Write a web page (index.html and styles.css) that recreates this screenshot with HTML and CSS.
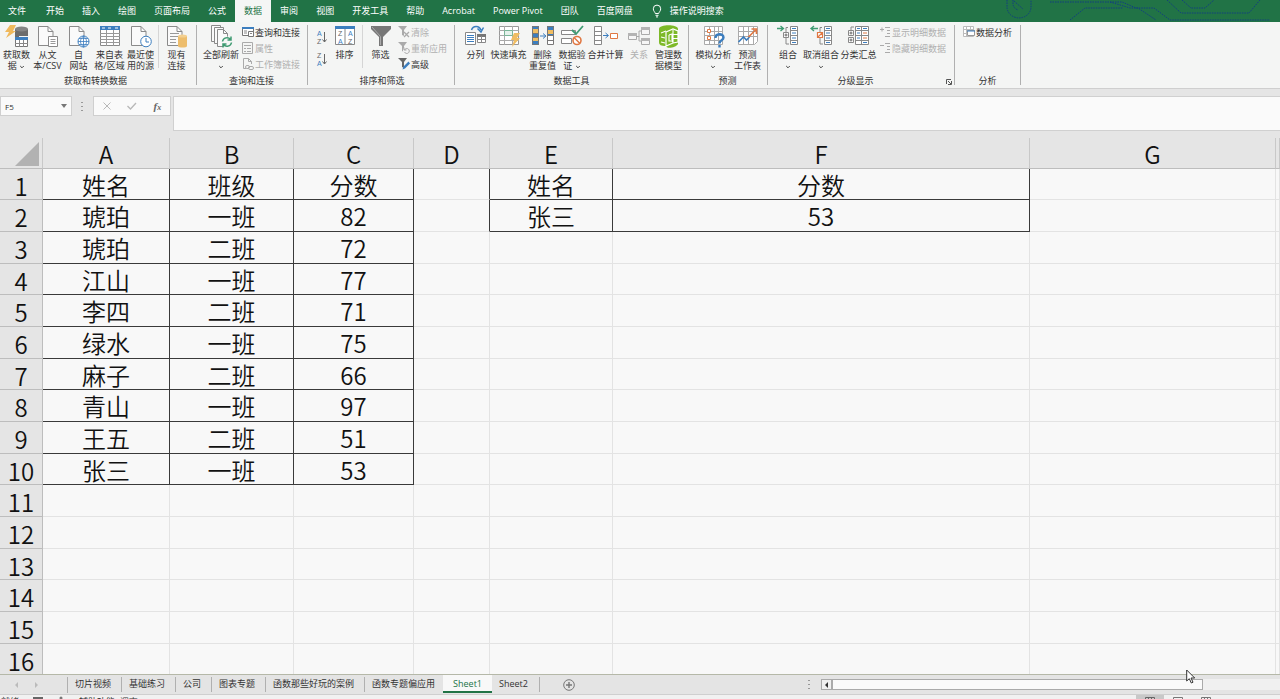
FILE: index.html
```html
<!DOCTYPE html>
<html lang="zh-CN">
<head>
<meta charset="utf-8">
<title>Sheet1</title>
<link rel="stylesheet" href="styles.css">
</head>
<body>
<svg class="sprite" aria-hidden="true">
  <symbol id="doc" viewBox="0 0 24 24"><path d="M2.500 1.500h9.500l5 5v14h-14.500z" fill="#fafafa" stroke="#8a8a8a"/><path d="M12 1.500v5h5" fill="none" stroke="#8a8a8a"/></symbol>
  <symbol id="chev" viewBox="0 0 6 4"><path d="M1.200 1l1.800 1.800L4.800 1" fill="none" stroke="#444"/></symbol>
</svg>

<nav class="tabs">
  <button class="tab first">文件</button><button class="tab">开始</button><button class="tab">插入</button><button class="tab">绘图</button><button class="tab">页面布局</button><button class="tab">公式</button><button class="tab on">数据</button><button class="tab">审阅</button><button class="tab">视图</button><button class="tab">开发工具</button><button class="tab">帮助</button><button class="tab">Acrobat</button><button class="tab">Power Pivot</button><button class="tab">团队</button><button class="tab">百度网盘</button>
  <button class="tell"><svg width="10" height="14" viewBox="0 0 10 14" fill="none" stroke="#fff"><path d="M3.300 9.500C3 8 1.300 7 1.300 4.800a3.700 3.700 0 0 1 7.400 0C8.700 7 7 8 6.700 9.500zM3.500 11.300h3M4 12.900h2"/></svg>操作说明搜索</button>
  <svg class="circuit" width="280" height="22" viewBox="0 0 280 22" fill="none" stroke="#123f80" stroke-dasharray="1.500 1"><path d="M7 0v7a11 10 0 0 0 24 0V0M13 0v4a7 7 0 0 0 5 6M14 1l9 8M50 2h60M70 20l15-12h38M110 2l20 6h8l18 12M110 2h12l14 6h18l16 12h100M167 0l14 13h68l11-13M182 0l9 8h14l9-8"/></svg>
</nav>

<header class="ribbon">
  <section class="group g1">
    <div class="body">
      <button class="big w31"><svg viewBox="0 0 24 24"><path d="M10 4v13h4V11h9V4z" fill="#6c6c6c"/><ellipse cx="16.500" cy="4" rx="6.500" ry="2.500" fill="#858585"/><path d="M5 0h6L8 6h3L1 13l3-6H0z" fill="#f0b95c"/><path d="M10.500 12.500h12v9h-12z" fill="#fff" stroke="#777"/><path d="M10 12h13v3H10z" fill="#3c7ebf"/><path d="M14.500 15v7M18.500 15v7M10 18.500h13" stroke="#888"/></svg><span>获取数<br>据 <svg class="chev"><use href="#chev"/></svg></span></button>
      <button class="big w31"><svg viewBox="0 0 24 24"><use href="#doc"/><path d="M12.500 11.500h9v10h-9z" fill="#fff" stroke="#888"/><path d="M14.500 14.500h5M14.500 16.500h5M14.500 18.500h5" stroke="#999"/></svg><span>从文<br>本/CSV</span></button>
      <button class="big w31"><svg viewBox="0 0 24 24"><use href="#doc"/><circle cx="16.500" cy="16.500" r="5.500" fill="#fff" stroke="#3c7ebf"/><path d="M11 16.500h11M12 13.500h9M12 19.500h9M16.500 11v11M16.500 11c-4 3-4 8 0 11M16.500 11c4 3 4 8 0 11" fill="none" stroke="#3c7ebf" stroke-width=".8"/></svg><span>自<br>网站</span></button>
      <button class="big w31"><svg viewBox="0 0 24 24"><path d="M2.500 1.500h19v19h-19z" fill="#fff" stroke="#888"/><path d="M2 1h20v4H2z" fill="#3c7ebf"/><path d="M2 8.500h20M2 11.500h20M2 14.500h20M2 17.500h20M8.500 5v16M15.500 5v16" stroke="#999"/><path d="M4 3h3M10 3h3M17 3h3" stroke="#fff"/></svg><span>来自表<br>格/区域</span></button>
      <button class="big w31"><svg viewBox="0 0 24 24"><use href="#doc"/><circle cx="17" cy="16.500" r="5.300" fill="#fff" stroke="#3c7ebf"/><path d="M17 13v4h3" fill="none" stroke="#3c7ebf"/></svg><span>最近使<br>用的源</span></button>
      <i class="rule"></i>
      <button class="big w31"><svg viewBox="0 0 24 24"><use href="#doc"/><path d="M5 8.500h9M5 11.500h9M5 14.500h6M5 17.500h6" stroke="#999"/><path d="M13 11v10c0 2 9 2 9 0V11z" fill="#edbd6c"/><ellipse cx="17.500" cy="11" rx="4.500" ry="1.600" fill="#f4d08f"/></svg><span>现有<br>连接</span></button>
    </div>
    <h2>获取和转换数据</h2>
  </section>

  <section class="group g2">
    <div class="body">
      <button class="big w38"><svg viewBox="0 0 24 24" fill="#fafafa" stroke="#8a8a8a"><path d="M2.500.500h9v16h-9z"/><path d="M5.500 2.500h9v16h-9z"/><path d="M8.500 4.500h6l4 4v13h-10z"/><path d="M14.500 4.500v4h4" fill="none"/><circle cx="18" cy="17" r="5.500" fill="#f6f6f6" stroke="none"/><path d="M13.500 16.500a4.500 4.500 0 0 1 8-2M22.500 17.500a4.500 4.500 0 0 1-8 2M22 11.500V15h-3.500M14 22.500V19h3.500" fill="none" stroke="#3f9b72" stroke-width="1.500"/></svg><span>全部刷新<br><svg class="chev"><use href="#chev"/></svg></span></button>
      <div class="list">
        <button><svg viewBox="0 0 12 12"><path d="M.500 1.500h11v8H.500z" fill="#fff" stroke="#777"/><path d="M0 1h12v2H0z" fill="#3c7ebf"/><path d="M6.500 5.500h5v5h-5z" fill="#fff" stroke="#777"/><path d="M2 5h3M2 7h3M8 7.500h2" stroke="#888"/></svg>查询和连接</button>
        <button disabled><svg viewBox="0 0 12 12" stroke="#aaa" fill="none"><path d="M.500.500h10v11H.500zM2 3.500h7M2 6.500h2M5 6.500h4M2 9.500h2M5 9.500h4"/></svg>属性</button>
        <button disabled><svg viewBox="0 0 12 12" stroke="#aaa" fill="none"><path d="M4 10.500H1.500v-10h5l3 3V6M6.500.500v3h3"/><rect x="3.500" y="7.500" width="4" height="3" rx="1.500"/><rect x="6.500" y="8.500" width="5" height="3" rx="1.500"/></svg>工作簿链接</button>
      </div>
    </div>
    <h2>查询和连接</h2>
  </section>

  <section class="group g3">
    <div class="body">
      <div class="sorts">
        <button aria-label="升序"><svg viewBox="0 0 12 16"><text x="1" y="7" fill="#3c7ebf">A</text><text x="1" y="15" fill="#666">Z</text><path d="M8.500 3v10M6.500 10.500l2 2.500 2-2.500" fill="none" stroke="#666"/></svg></button>
        <button aria-label="降序"><svg viewBox="0 0 12 16"><text x="1" y="7" fill="#666">Z</text><text x="1" y="15" fill="#3c7ebf">A</text><path d="M8.500 3v10M6.500 10.500l2 2.500 2-2.500" fill="none" stroke="#666"/></svg></button>
      </div>
      <button class="big w29"><svg viewBox="0 0 24 24"><path d="M2.500 2.500h19v17h-19z" fill="#fff" stroke="#888"/><path d="M2 1h20v3H2z" fill="#3c7ebf"/><path d="M12 4v16" stroke="#888"/><g class="az"><text x="5" y="11" fill="#666">Z</text><text x="5" y="19" fill="#3c7ebf">A</text><text x="15" y="11" fill="#3c7ebf">A</text><text x="15" y="19" fill="#666">Z</text></g></svg><span>排序</span></button>
      <i class="rule"></i>
      <button class="big w31"><svg viewBox="0 0 24 24"><path d="M2 1h20v3l-8 8v9h-4v-9L2 4z" fill="#777"/><path d="M3 2l8.500 9.500V20" stroke="#aaa" fill="none"/></svg><span>筛选</span></button>
      <div class="list">
        <button disabled><svg viewBox="0 0 12 12"><path d="M0 0h9L6 4v6L4 9V4z" fill="#aaa"/><path d="M6 6l5 5M11 6l-5 5" stroke="#aaa" stroke-width="1.300"/></svg>清除</button>
        <button disabled><svg viewBox="0 0 12 12"><path d="M0 0h9L6 4v6L4 9V4z" fill="#aaa"/><circle cx="8.500" cy="8.500" r="3.500" fill="#f4f4f4"/><path d="M6 5.500V8h2.500M6.500 8a2.500 2.500 0 1 1 0 2" fill="none" stroke="#aaa"/></svg>重新应用</button>
        <button><svg viewBox="0 0 12 12"><path d="M0 0h9L6 4v6L4 9V4z" fill="#666"/><path d="M4.500 11.500l1-3 5-5 1.500 2-5 5z" fill="#3c7ebf"/></svg>高级</button>
      </div>
    </div>
    <h2>排序和筛选</h2>
  </section>

  <section class="group g4">
    <div class="body">
      <button class="big w29"><svg viewBox="0 0 24 24"><path d="M1.500 7.500h10v12h-10z" fill="#fff" stroke="#888"/><path d="M3 10.500h7M3 12.500h7M3 14.500h7M3 16.500h7" stroke="#3c7ebf"/><path d="M13.500 9.500h8v8h-8z" fill="#fff" stroke="#888"/><path d="M13 9h9v3h-9z" fill="#777"/><path d="M17.500 11v7M13 14.500h9" stroke="#888"/><path d="M7.500 5C9 .500 15 0 17 5M13.500 3.500L17 7l2.500-4.500" fill="none" stroke="#3c7ebf" stroke-width="1.500"/></svg><span>分列</span></button>
      <button class="big w37"><svg viewBox="0 0 24 24"><path d="M2.500 1.500h19v18h-19z" fill="#fff" stroke="#999"/><path d="M2 5.500h20M2 10.500h20M2 15.500h20M7.500 1v19M15.500 1v19" stroke="#aaa"/><path d="M7.500 5.500h8v5h-8z" fill="#e6f2ec" stroke="#7ab598"/><path d="M17 8h6l-3 5h3l-8 9 2-7h-3z" fill="#f0bd62"/></svg><span>快速填充</span></button>
      <button class="big w31"><svg viewBox="0 0 24 24"><path d="M1 1h7v19H1zM16 1h7v9h-7z" fill="#3c7ebf"/><path d="M1 4h7v4H1zM1 12h7v4H1zM16 5h7v4h-7z" fill="#f0bd62"/><path d="M16 10h7v10h-7z" fill="#fff"/><path d="M1.500 1.500h6v18h-6zM16.500 1.500h6v18h-6zM16 10.500h7M16 15.500h7M1 8.500h7M1 12.500h7" fill="none" stroke="#777"/><path d="M9 11h5M12 8.500l3 2.500-3 2.500" fill="none" stroke="#3c7ebf"/></svg><span>删除<br>重复值</span></button>
      <button class="big w28"><svg viewBox="0 0 24 24"><path d="M1.500 5.500h14v4h-14zM1.500 13.500h10v5h-10z" fill="#fff" stroke="#888"/><path d="M12 5l4 4 7-8" fill="none" stroke="#3f9b72" stroke-width="1.800"/><circle cx="17" cy="15.500" r="4" fill="#fff" stroke="#e07843" stroke-width="1.600"/><path d="M14 12.500l6 6" stroke="#e07843" stroke-width="1.500"/></svg><span>数据验<br>证 <svg class="chev"><use href="#chev"/></svg></span></button>
      <button class="big w39"><svg viewBox="0 0 24 24"><path d="M.500 1.500h7v18h-7zM.500 6.500h7M.500 10.500h7M.500 15.500h7" fill="#fff" stroke="#888"/><path d="M9 10.500h5M11.500 8l3 2.500-3 2.500" fill="none" stroke="#3c7ebf"/><path d="M16.500 8.500h7v5h-7z" fill="#fff" stroke="#e07843"/></svg><span>合并计算</span></button>
      <button class="big w28" disabled><svg viewBox="0 0 24 24"><path d="M1.500 8.500h8v6h-8zM14.500 2.500h8v7h-8zM14.500 13.500h8v6h-8z" fill="#f6f6f6" stroke="#aaa"/><path d="M1 8h9v3H1zM14 2h9v3h-9zM14 13h9v3h-9z" fill="#b4b4b4"/><path d="M10 11.500h2V6h2M12 11v5h2" fill="none" stroke="#aaa"/></svg><span>关系</span></button>
      <button class="big w31"><svg viewBox="0 0 24 24"><path d="M2 4c0-5 19-5 19 0v15c-2 4-12 5-12 2-5 0-7-1-7-4z" fill="#7db928"/><path d="M9 7l7-3 5 2v11l-5 1-7 3z" fill="#7db928" stroke="#fff" stroke-width="1.200"/><path d="M4 8l5-2M4 12l4 1M4 17l4 1M12 10l3-1v8M16 5v13M16 9.500h5M16 13.500h5M12 10v6h2" fill="none" stroke="#fff" stroke-width="1.100"/></svg><span>管理数<br>据模型</span></button>
    </div>
    <h2>数据工具</h2>
  </section>

  <section class="group g5">
    <div class="body">
      <button class="big w39"><svg viewBox="0 0 24 24"><path d="M2.500 1.500h18v18h-18zM2 6.500h18M2 10.500h18M2 15.500h18M7.500 1v19M12.500 1v19M16.500 1v19" fill="#fff" stroke="#aaa"/><path d="M5.500 4.500h3v3h-3zM5.500 11.500h3v3h-3z" fill="#fff" stroke="#e07843"/><path d="M13.500 13c0-5 8-5 8-.500 0 3-4 2.500-4 6M17.500 20v2.500" fill="none" stroke="#3c7ebf" stroke-width="2.400"/></svg><span>模拟分析<br><svg class="chev"><use href="#chev"/></svg></span></button>
      <button class="big w29"><svg viewBox="0 0 24 24"><path d="M2.500 1.500h19v15l-3 3h-16zM2 6.500h19M2 11.500h19M7.500 1v19M12.500 1v19M17.500 1v19" fill="#fff" stroke="#aaa"/><path d="M2.500 17l5-5 3 3 3-3" fill="none" stroke="#3c7ebf" stroke-width="1.600"/><path d="M12.500 12l7-7M15.500 4h5v5" fill="none" stroke="#e07843" stroke-width="1.600"/></svg><span>预测<br>工作表</span></button>
    </div>
    <h2>预测</h2>
  </section>

  <section class="group g6">
    <div class="body">
      <button class="big w28"><svg viewBox="0 0 24 24"><path d="M14.500 1.500h7v18h-7zM14 5.500h8M14 10.500h8M14 15.500h8" fill="#fff" stroke="#888"/><path d="M16 3.500h4M16 8h4M16 13h4M16 17.500h4" stroke="#3c7ebf"/><path d="M12 2.500h-2v5M10 13v6h3" fill="none" stroke="#888"/><path d="M7.500 7.500h5v5h-5z" fill="#fff" stroke="#888"/><path d="M8.500 10h3M10 8.500v3" stroke="#666"/><path d="M1 3.500h6M4.500 1l3 2.500-3 2.500" fill="none" stroke="#3f9b72" stroke-width="1.300"/></svg><span>组合<br><svg class="chev"><use href="#chev"/></svg></span></button>
      <button class="big w38"><svg viewBox="0 0 24 24"><path d="M15.500 1.500h7v18h-7zM15 5.500h8M15 10.500h8M15 15.500h8" fill="#fff" stroke="#888"/><path d="M17 3.500h4M17 8h4M17 13h4M17 17.500h4" stroke="#3c7ebf"/><path d="M13 2.500h-2v5M11 13v6h3" fill="none" stroke="#888"/><path d="M8.500 7.500h5v5h-5zM8.500 12.500l5-5" fill="#fff" stroke="#e07843" stroke-width="1.200"/><path d="M9 3.500H2M5 1L2 3.500 5 6" fill="none" stroke="#3f9b72" stroke-width="1.300"/></svg><span>取消组合<br><svg class="chev"><use href="#chev"/></svg></span></button>
      <button class="big w37"><svg viewBox="0 0 24 24"><path d="M8.500 1.500h13v18h-13zM8 5.500h14M8 10.500h14M8 15.500h14M14.500 1v19" fill="#fff" stroke="#888"/><path d="M10 3.500h3M10 8h3M10 13h3" stroke="#3c7ebf"/><path d="M16 8h4M16 13h4" stroke="#e07843"/><path d="M16 3.500h4M16 17.500h4" stroke="#3c7ebf"/><path d="M1.500 5.500h5v5h-5zM1.500 12.500h5v5h-5zM4 2v3M4 2h3" fill="#fff" stroke="#888"/><path d="M2.500 8h3M4 6.500v3M2.500 15h3M4 13.500v3" stroke="#666"/></svg><span>分类汇总</span></button>
      <div class="list">
        <button disabled><svg viewBox="0 0 12 12" stroke="#aaa" fill="none"><path d="M1 3.500h4M3 1.500v4M6 1.500h5M8 4.500h3M8 7.500h3M6 10.500h5"/></svg>显示明细数据</button>
        <button disabled><svg viewBox="0 0 12 12" stroke="#aaa" fill="none"><path d="M1 3.500h4M6 1.500h5M8 4.500h3M8 7.500h3M6 10.500h5"/></svg>隐藏明细数据</button>
      </div>
    </div>
    <h2>分级显示</h2>
    <button class="launch" aria-label="分级显示设置"><svg width="6" height="6" viewBox="0 0 6 6" stroke="#555" fill="none"><path d="M.500 5V.500H5M2 2l3 3M5.500 2v3.500H2"/></svg></button>
  </section>

  <section class="group g7">
    <div class="body">
      <div class="list">
        <button><svg viewBox="0 0 12 12"><path d="M.500.500h10v10H.500zM0 3.500h11M0 7.500h11M3.500 0v11M7.500 0v11" fill="#fff" stroke="#bbb"/><path d="M4.500 4.500h7v5h-7z" fill="#fff" stroke="#999"/><path d="M4 5h8" stroke="#3c7ebf"/></svg>数据分析</button>
      </div>
    </div>
    <h2>分析</h2>
  </section>
</header>

<div class="formula">
  <div class="namebox"><input type="text" value="F5" aria-label="名称框"><svg width="6" height="4" viewBox="0 0 6 4"><path d="M0 0h6L3 4z" fill="#777"/></svg></div>
  <svg class="grip" width="2" height="9" viewBox="0 0 2 9"><path d="M0 0h2v1H0zM0 4h2v1H0zM0 8h2v1H0z" fill="#999"/></svg>
  <div class="fxbox">
    <button aria-label="取消"><svg width="8" height="8" viewBox="0 0 8 8"><path d="M.500.500l7 7M7.500.500l-7 7" stroke="#b8b8b8"/></svg></button>
    <button aria-label="输入"><svg width="10" height="8" viewBox="0 0 10 8"><path d="M.500 4l3 3L9 1" fill="none" stroke="#b8b8b8" stroke-width="1.300"/></svg></button>
    <button class="fx">f<small>x</small></button>
  </div>
  <textarea aria-label="编辑栏"></textarea>
</div>

<main class="sheet">
  <table>
    <colgroup><col class="c0"><col class="cA"><col class="cB"><col class="cC"><col class="cD"><col class="cE"><col class="cF"><col class="cG"><col></colgroup>
    <thead><tr><th><svg width="25" height="25" viewBox="0 0 25 25"><path d="M24 0v24H0z" fill="#b2b2b2"/></svg></th><th>A</th><th>B</th><th>C</th><th>D</th><th>E</th><th>F</th><th>G</th><th></th></tr></thead>
    <tbody>
      <tr><th>1</th><td class="k">姓名</td><td class="k">班级</td><td class="k">分数</td><td class="e"></td><td class="k">姓名</td><td class="k">分数</td><td></td><td></td></tr>
      <tr><th>2</th><td class="k">琥珀</td><td class="k">一班</td><td class="k">82</td><td class="e"></td><td class="k">张三</td><td class="k">53</td><td></td><td></td></tr>
      <tr><th>3</th><td class="k">琥珀</td><td class="k">二班</td><td class="k">72</td><td></td><td></td><td></td><td></td><td></td></tr>
      <tr><th>4</th><td class="k">江山</td><td class="k">一班</td><td class="k">77</td><td></td><td></td><td></td><td></td><td></td></tr>
      <tr><th>5</th><td class="k">李四</td><td class="k">二班</td><td class="k">71</td><td></td><td></td><td></td><td></td><td></td></tr>
      <tr><th>6</th><td class="k">绿水</td><td class="k">一班</td><td class="k">75</td><td></td><td></td><td></td><td></td><td></td></tr>
      <tr><th>7</th><td class="k">麻子</td><td class="k">二班</td><td class="k">66</td><td></td><td></td><td></td><td></td><td></td></tr>
      <tr><th>8</th><td class="k">青山</td><td class="k">一班</td><td class="k">97</td><td></td><td></td><td></td><td></td><td></td></tr>
      <tr><th>9</th><td class="k">王五</td><td class="k">二班</td><td class="k">51</td><td></td><td></td><td></td><td></td><td></td></tr>
      <tr><th>10</th><td class="k">张三</td><td class="k">一班</td><td class="k">53</td><td></td><td></td><td></td><td></td><td></td></tr>
      <tr><th>11</th><td></td><td></td><td></td><td></td><td></td><td></td><td></td><td></td></tr>
      <tr><th>12</th><td></td><td></td><td></td><td></td><td></td><td></td><td></td><td></td></tr>
      <tr><th>13</th><td></td><td></td><td></td><td></td><td></td><td></td><td></td><td></td></tr>
      <tr><th>14</th><td></td><td></td><td></td><td></td><td></td><td></td><td></td><td></td></tr>
      <tr><th>15</th><td></td><td></td><td></td><td></td><td></td><td></td><td></td><td></td></tr>
      <tr><th>16</th><td></td><td></td><td></td><td></td><td></td><td></td><td></td><td></td></tr>
    </tbody>
  </table>
</main>

<footer class="bottom">
  <div class="arrows"><svg width="24" height="6" viewBox="0 0 24 6"><path d="M3 0v6L0 3zM20 0v6l3-3z" fill="#bbb"/></svg></div>
  <button class="st">切片视频</button><button class="st">基础练习</button><button class="st">公司</button><button class="st">图表专题</button><button class="st">函数那些好玩的案例</button><button class="st last">函数专题偏应用</button><button class="st cur">Sheet1</button><button class="st">Sheet2</button>
  <button class="add" aria-label="新工作表"><svg width="12" height="12" viewBox="0 0 12 12" fill="none" stroke="#777"><circle cx="6" cy="6" r="5.300"/><path d="M3 6h6M6 3v6" stroke-width="1.400"/></svg></button>
  <svg class="dots" width="2" height="9" viewBox="0 0 2 9"><path d="M0 0h2v1H0zM0 4h2v1H0zM0 8h2v1H0z" fill="#999"/></svg>
  <div class="scroll"><button aria-label="向左滚动"><svg width="3" height="6" viewBox="0 0 3 6"><path d="M3 0v6L0 3z" fill="#333"/></svg></button><div class="thumb"></div></div>
</footer>

<div class="status">
  <span>就绪</span>
  <svg width="10" height="8" viewBox="0 0 10 8"><path d="M0 1h10v7H0z" fill="#666"/></svg>
  <svg width="8" height="8" viewBox="0 0 8 8"><circle cx="4" cy="2" r="1.500" fill="#777"/></svg>
  <span>辅助功能: 调查</span>
  <div class="views">
    <button class="sel" aria-label="普通"><svg width="10" height="8" viewBox="0 0 10 8" fill="none" stroke="#666"><path d="M.500.500h9v7h-9zM3.500 0v8M6.500 0v8"/></svg></button>
    <button aria-label="页面布局"><svg width="10" height="8" viewBox="0 0 10 8" fill="none" stroke="#777"><path d="M.500.500h9v7h-9zM3 2.500h4"/></svg></button>
    <button aria-label="分页预览"><svg width="10" height="8" viewBox="0 0 10 8" fill="none" stroke="#777"><path d="M.500.500h9v7h-9zM3.500 0v8M6.500 0v8"/></svg></button>
  </div>
</div>

<svg class="cursor" width="10" height="15" viewBox="0 0 10 15"><path d="M.700 1v11l2.600-2.300 2 4.300 1.700-.800-2-4.200h3.700z" fill="#fff" stroke="#333"/></svg>
</body>
</html>
```
FILE: styles.css
```css
* { box-sizing: border-box; }
body {
  margin: 0;
  height: 100vh;
  overflow: hidden;
  display: flex;
  flex-direction: column;
  background: #e5e5e5;
  color: #333;
  font: 9px/11px "Open Sans", "Noto Sans CJK SC", sans-serif;
}
button { border: 0; padding: 0; margin: 0; background: none; color: inherit; font: inherit; white-space: nowrap; }
input, textarea { border: 0; outline: 0; background: none; color: inherit; font: inherit; }
svg { display: block; flex: none; }
.sprite { position: absolute; width: 0; height: 0; }

.tabs { position: relative; flex: none; display: flex; height: 22px; background: #217346; color: #fff; }
.tab { padding: 0 9px 2px; height: 22px; }
.tab.first { padding-left: 8px; padding-right: 11px; }
.tab.on { background: #f5f6f5; color: #217346; }
.tell { display: flex; align-items: center; gap: 8px; margin-left: 10px; padding-bottom: 1px; }
.circuit { position: absolute; right: 0; top: 0; }

.ribbon { flex: none; display: flex; height: 67px; background: #f4f5f4; border-bottom: 1px solid #cfcfcf; }
.group { position: relative; display: flex; flex-direction: column; padding-top: 3px; }
.group::after { content: ""; position: absolute; right: 0; top: 3px; bottom: 3px; width: 1px; background: #b0b0b0; }
.group h2 { margin: 0 7px 0 0; font: inherit; text-align: center; line-height: 12px; }
.group.g6 h2 { margin-right: 18px; }
.body { display: flex; height: 50px; }
.g1 { width: 197px; padding-left: 1px; }
.g2 { width: 111px; padding-left: 5px; }
.g3 { width: 147px; padding-left: 8px; }
.g4 { width: 234px; padding-left: 6px; }
.g5 { width: 79px; padding-left: 5px; }
.g6 { width: 187px; padding-left: 6px; }
.g7 { width: 66px; padding-left: 6px; }
.big { display: flex; flex-direction: column; align-items: center; }
.big > svg { width: 24px; height: 24px; }
.big > span { display: block; text-align: center; }
.big .chev { display: inline-block; width: 6px; height: 4px; vertical-align: middle; }
.w28 { width: 28px; }
.w29 { width: 29px; }
.w31 { width: 31px; }
.w37 { width: 37px; }
.w38 { width: 38px; }
.w39 { width: 39px; }
.rule { width: 1px; height: 43px; margin: 0 2px; background: #d5d5d5; }
.list { display: flex; flex-direction: column; margin: -1px 0 0 2px; }
.list button { display: flex; align-items: center; gap: 1px; height: 16px; }
.list svg { width: 12px; height: 12px; }
button:disabled { color: #b0b0b0; }
.sorts { display: flex; flex-direction: column; gap: 6px; padding-top: 4px; width: 14px; }
.sorts svg { width: 12px; height: 16px; }
.sorts text, .az { font: 7px "Liberation Sans", sans-serif; }
.sorts + .big { margin-right: 1px; }
.launch { position: absolute; right: 3px; bottom: 3px; }

.formula { flex: none; display: flex; align-items: flex-start; height: 49px; padding-top: 7px; }
.namebox { display: flex; align-items: center; width: 72px; height: 20px; padding: 0 4px; background: #fafafa; border: 1px solid #cfcfcf; }
.namebox input { flex: 1; min-width: 0; padding: 0; font-size: 8px; }
.grip { margin: 6px 10px 0 9px; }
.fxbox { display: flex; width: 78px; height: 20px; background: #fafafa; border: 1px solid #cfcfcf; }
.fxbox button { flex: 1; display: flex; align-items: center; justify-content: center; }
.fxbox .fx { font: italic bold 11px "Liberation Serif", serif; color: #666; }
.fx small { font-size: 8px; padding-top: 2px; }
.formula textarea { flex: 1; height: 35px; margin-left: 2px; padding: 2px; background: #fafafa; border: 1px solid #d0d0d0; border-right: 0; resize: none; }

.sheet { flex: 1; min-height: 0; overflow: hidden; background: #f8f8f8; }
table { width: 100%; table-layout: fixed; border-collapse: separate; border-spacing: 0; color: #111; }
.c0 { width: 43px; }
.cA { width: 127px; }
.cB { width: 124px; }
.cC { width: 120px; }
.cD { width: 76px; }
.cE { width: 123px; }
.cF { width: 417px; }
.cG { width: 246px; }
th, td { height: 32px; padding: 0; border: 0 solid #e3e3e3; border-width: 0 1px 1px 0; text-align: center; font: 350 24px/28px "Noto Sans CJK SC", sans-serif; }
th { padding-top: 2px; background: #e5e5e5; border-color: #bdbdbd; }
thead th { height: 31px; border-right-color: #c8c8c8; }
thead svg { margin-left: 15px; }
tbody tr:nth-child(3n+1) > * { height: 31px; line-height: 27px; }
td.k { border-color: #3a3a3a; }
td.e { border-right-color: #3a3a3a; }
tbody th + td { color: #111; }

.bottom { flex: none; display: flex; align-items: center; height: 21px; border-top: 1px solid #b5b8a8; border-bottom: 1px solid #cfcfcf; background: #e4e4e4; }
.arrows { display: flex; align-items: center; width: 68px; height: 16px; padding-left: 15px; border-right: 1px solid #b0b0b0; }
.st { height: 15px; padding: 0 10px 2px 7px; border-right: 1px solid #b0b0b0; }
.st.last { padding-right: 8px; border-right: 0; }
.st.cur { align-self: flex-start; height: 18px; padding: 0 10px; background: #f8f8f8; color: #217346; border-right: 0; border-bottom: 2px solid #217346; }
.st.cur + .st { padding-right: 11px; }
.add { margin-left: 23px; }
.dots { margin-left: auto; margin-right: 11px; }
.scroll { display: flex; width: 459px; height: 11px; background: #f0f0f0; }
.scroll button { width: 11px; border: 1px solid #aaa; display: flex; align-items: center; justify-content: center; }
.thumb { width: 371px; background: #fafafa; border: 1px solid #aaa; }

.status { flex: none; display: flex; align-items: flex-start; height: 4px; padding: 1px 0 0 1px; gap: 14px; overflow: hidden; background: #f1f1f1; }
.views { display: flex; margin: -1px 60px 0 auto; }
.views button { width: 28px; height: 12px; padding: 2px 9px; }
.views .sel { background: #c8c8c8; }
.cursor { position: absolute; left: 1186px; top: 669px; }
```
